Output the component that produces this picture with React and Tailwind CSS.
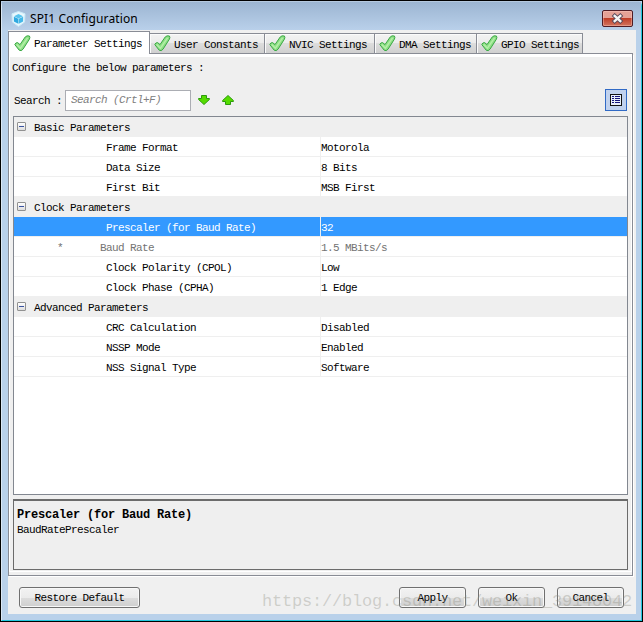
import React from 'react';

const TABS = [
  { label: 'Parameter Settings', width: 'w-[142px]' },
  { label: 'User Constants', width: 'w-[115px]' },
  { label: 'NVIC Settings', width: 'w-[110px]' },
  { label: 'DMA Settings', width: 'w-[102px]' },
  { label: 'GPIO Settings', width: 'w-[106px]' },
];

const GROUPS = [
  {
    title: 'Basic Parameters',
    rows: [
      { name: 'Frame Format', value: 'Motorola' },
      { name: 'Data Size', value: '8 Bits' },
      { name: 'First Bit', value: 'MSB First' },
    ],
  },
  {
    title: 'Clock Parameters',
    rows: [
      { name: 'Prescaler (for Baud Rate)', value: '32', selected: true },
      { name: 'Baud Rate', value: '1.5 MBits/s', readOnly: true },
      { name: 'Clock Polarity (CPOL)', value: 'Low' },
      { name: 'Clock Phase (CPHA)', value: '1 Edge' },
    ],
  },
  {
    title: 'Advanced Parameters',
    rows: [
      { name: 'CRC Calculation', value: 'Disabled' },
      { name: 'NSSP Mode', value: 'Enabled' },
      { name: 'NSS Signal Type', value: 'Software' },
    ],
  },
];

function Check() {
  return (
    <svg width="17" height="17" viewBox="0 0 17 17" className="shrink-0">
      <path
        d="M.8 9.6 Q1.6 7.4 3.6 7.6 L6 9.6 L11.2 2 Q12.8 .2 15.4 1 Q16.4 2.2 15.4 4.2 L9 14.2 Q7.2 16.6 5.2 15.2 Z"
        fill="#8fdf86"
        stroke="#3aa845"
        strokeWidth="1"
        strokeLinejoin="round"
      />
      <path d="M2.6 9.6 L6.4 13.2 L13.6 2.8" fill="none" stroke="#b4f0a8" strokeWidth="1.4" />
    </svg>
  );
}

function Arrow({ up }) {
  return (
    <svg width="12" height="10" viewBox="0 0 12 10" className={up ? 'rotate-180' : ''}>
      <path
        d="M3.5 .5 H8.5 V3.5 H11.4 V4.5 L6 9.5 L.6 4.5 V3.5 H3.5 Z"
        fill="#55dc00"
        stroke="#2c9a0c"
        strokeWidth="1"
        strokeLinejoin="round"
      />
    </svg>
  );
}

function Logo() {
  return (
    <svg width="15" height="16" viewBox="0 0 15 16" className="shrink-0">
      <path d="M7.5 .5 L14 2.8 L13.6 11 L7.5 15.4 L1.4 11 L1 2.8 Z" fill="#e8f7fd" stroke="#c9eaf8" />
      <path d="M7.5 3 L12 5.2 L7.5 7.4 L3 5.2 Z" fill="#58c4ee" />
      <path d="M2.9 5.7 L7.3 7.8 V12.8 L2.9 10.4 Z" fill="#2fa9e0" />
      <path d="M12.1 5.7 L7.7 7.8 V12.8 L12.1 10.4 Z" fill="#45b8e8" />
    </svg>
  );
}

function TitleBar() {
  return (
    <header className="flex h-[28px] shrink-0 items-start justify-between bg-gradient-to-b from-[#9cb5d2] to-[#b9d0ea] pl-[9px] pr-[8px]">
      <div className="flex h-[29px] items-center gap-[4px] pt-[5px]">
        <Logo />
        <h1 className="whitespace-pre font-['Noto_Sans',sans-serif] text-[12px] leading-4 tracking-[0.12px] text-black">
          SPI1 Configuration
        </h1>
      </div>
      <button className="mt-[8px] flex h-[17px] w-[31px] items-center justify-center rounded-[2px] border border-[#4f1c25] bg-gradient-to-b from-[#e5a196] from-45% via-[#bf3d27] via-50% to-[#d2735e] shadow-[inset_0_0_0_1px_rgba(255,210,200,0.4)]">
        <svg width="13" height="11" viewBox="0 0 13 11">
          <path d="M3.7 2.9 L9.3 8.1 M9.3 2.9 L3.7 8.1" stroke="#59495a" strokeWidth="4.2" strokeLinecap="square" />
          <path d="M3.7 2.9 L9.3 8.1 M9.3 2.9 L3.7 8.1" stroke="#f5f5f5" strokeWidth="2.4" strokeLinecap="square" />
        </svg>
      </button>
    </header>
  );
}

function Tabs() {
  return (
    <nav className="flex h-[23px] shrink-0 items-end">
      {TABS.map((tab, i) =>
        i === 0 ? (
          <button
            key={tab.label}
            className={`${tab.width} flex h-[23px] shrink-0 items-center gap-[3px] whitespace-pre border-x border-t border-[#898c95] bg-white pl-[5px]`}
          >
            <Check />
            <span className="pt-[2px]">{tab.label}</span>
          </button>
        ) : (
          <button
            key={tab.label}
            className={`${tab.width} flex h-[21px] shrink-0 items-center gap-[3px] whitespace-pre border-b border-r border-t border-[#898c95] bg-[linear-gradient(to_bottom,#f3f3f3,#ebebeb_50%,#dddddd_50%,#d0d0d0)] pl-[4px] shadow-[inset_1px_1px_0_#fbfbfb]`}
          >
            <Check />
            <span className="pt-[3px]">{tab.label}</span>
          </button>
        ),
      )}
      <div className="h-px flex-1 bg-[#898c95]" />
      <div className="w-[3px]" />
    </nav>
  );
}

function SearchBar() {
  return (
    <div className="mt-[15px] flex h-[22px] shrink-0 items-center pl-[1px] pr-[1px]">
      <label className="w-[51px] whitespace-pre pt-px">Search :</label>
      <input
        readOnly
        placeholder="Search (Crtl+F)"
        className="h-[21px] w-[126px] border border-[#abadb3] bg-white pl-[5px] italic placeholder:text-[#808080]"
      />
      <div className="ml-[7px] flex items-center gap-[12px]">
        <Arrow />
        <Arrow up />
      </div>
      <button className="ml-auto flex h-[22px] w-[22px] items-center justify-center border border-[#316ac5] bg-[#c1d2ee]">
        <svg width="12" height="12" viewBox="0 0 12 12" shapeRendering="crispEdges">
          <rect x=".5" y=".5" width="11" height="11" fill="#e8eefa" stroke="#111" />
          <path d="M2 2.5h2M2 4.5h2M2 6.5h2M2 8.5h2M5 2.5h5M5 4.5h5M5 6.5h5M5 8.5h5" stroke="#15157a" />
        </svg>
      </button>
    </div>
  );
}

function Row({ row }) {
  const tone = row.selected
    ? 'bg-[#3399ff] text-white'
    : row.readOnly
      ? 'bg-white text-[#737373]'
      : 'bg-white text-black';
  return (
    <div className={`flex h-[20px] border-b border-[#efefef] ${tone}`}>
      <div className="flex w-[307px] shrink-0 items-center whitespace-pre border-r border-[#efefef] pt-[2px]">
        <span className={row.readOnly ? 'w-[86px] pl-[43px]' : 'w-[92px]'}>{row.readOnly ? '*' : ''}</span>
        <span>{row.name}</span>
      </div>
      <div className="flex items-center whitespace-pre pt-[2px]">{row.value}</div>
    </div>
  );
}

function ParameterTable() {
  return (
    <section className="mt-[5px] h-[379px] shrink-0 border border-[#828790] bg-white">
      {GROUPS.map((group) => (
        <div key={group.title}>
          <div className="flex h-[20px] items-center bg-[#efefef] pl-[3px]">
            <span className="-mt-px flex h-[9px] w-[9px] items-center justify-center rounded-[1px] border border-[#919191] bg-gradient-to-b from-white to-[#dddddd]">
              <span className="h-px w-[5px] bg-[#3a52a0]" />
            </span>
            <span className="whitespace-pre pl-[8px] pt-[2px]">{group.title}</span>
          </div>
          {group.rows.map((row) => (
            <Row key={row.name} row={row} />
          ))}
        </div>
      ))}
    </section>
  );
}

function DialogButton({ width, children }) {
  return (
    <button
      className={`${width} flex h-[21px] shrink-0 items-center justify-center whitespace-pre rounded-[3px] border border-[#707070] bg-[linear-gradient(to_bottom,#f2f2f2,#ebebeb_50%,#dddddd_50%,#cfcfcf)] pt-px shadow-[inset_0_0_0_1px_#f8f8f8]`}
    >
      {children}
    </button>
  );
}

export default function App() {
  return (
    <div className="relative flex h-[622px] w-[643px] flex-col overflow-hidden border border-black bg-[#b9d1ea] font-['Liberation_Mono',monospace] text-[11px] leading-[14px] tracking-[-0.6px] text-black">
      <div className="flex h-[620px] flex-col rounded-t-[5px] border-b border-l border-r border-t border-b-[#21c8de] border-l-[#dbe8f5] border-r-[#21c8de] border-t-[#b5c9df]">
        <TitleBar />
        <main className="ml-[6px] flex h-[584px] w-[628px] flex-col bg-[#f0f0f0] pt-px">
          <Tabs />
          <div className="flex h-[522px] w-[625px] shrink-0 flex-col border-x border-b border-[#898c95] pb-[3px] shadow-[1px_1px_0_#ffffff]">
            <div className="flex flex-1 flex-col border-x border-b border-white bg-[#efefef] pl-[3px] pr-[3px]">
              <div className="-mx-[3px] h-[3px] shrink-0 bg-white" />
              <p className="-ml-px mt-[3px] h-[14px] shrink-0 whitespace-pre pt-px">
                Configure the below parameters :
              </p>
              <SearchBar />
              <ParameterTable />
              <div className="mt-[4px] h-[71px] shrink-0 border border-t-2 border-[#6b6b6b] bg-[#efefef] pl-[3px] pt-[7px]">
                <h2 className="whitespace-pre text-[12px] font-bold leading-[15px] tracking-[-0.2px]">
                  Prescaler (for Baud Rate)
                </h2>
                <p className="whitespace-pre leading-[15px]">BaudRatePrescaler</p>
              </div>
            </div>
          </div>
          <footer className="flex items-center pl-[11px] pr-[12px] pt-[11px]">
            <DialogButton width="w-[121px]">Restore Default</DialogButton>
            <div className="ml-auto flex gap-[12px]">
              <DialogButton width="w-[67px]">Apply</DialogButton>
              <DialogButton width="w-[67px]">Ok</DialogButton>
              <DialogButton width="w-[67px]">Cancel</DialogButton>
            </div>
          </footer>
        </main>
      </div>
      <div className="pointer-events-none absolute left-[261px] top-[590px] whitespace-pre text-[17px] leading-[22px] tracking-[-0.2px] text-[#8c8c80]/35">
        https://blog.csdn.net/weixin_39148042
      </div>
    </div>
  );
}
